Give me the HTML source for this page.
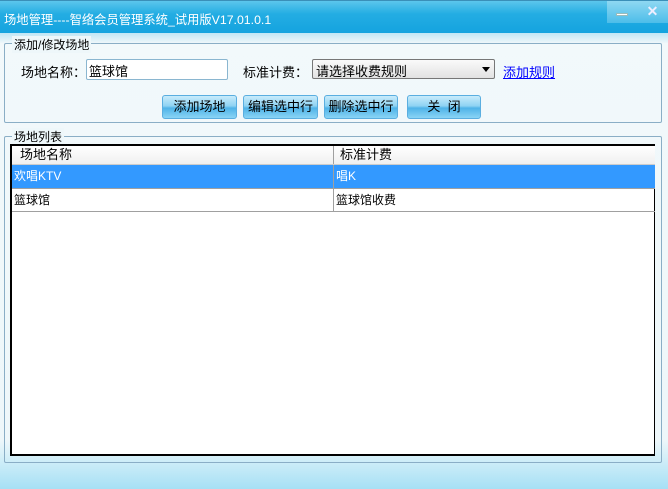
<!DOCTYPE html>
<html><head><meta charset="utf-8"><style>
*{margin:0;padding:0;box-sizing:border-box}
body{width:668px;height:489px;overflow:hidden;font-family:"Liberation Sans","Noto Sans CJK SC","WenQuanYi Zen Hei",sans-serif;font-size:12px;color:#000;position:relative;background:linear-gradient(#f2f9fb 0,#eef7fa 440px,#d0eef8 460px,#a6e0f5 489px)}
.a{position:absolute}
.title{left:0;top:0;width:668px;height:33px;background:linear-gradient(#5cc6ec,#24ade3 40%,#14a3df);border-top:1px solid #3a8fb8}
.title span{position:absolute;left:4px;top:9px;color:#fff;font-size:12.3px}
.below{left:0;top:33px;width:668px;height:10px;background:linear-gradient(#bfe6f5,#eef7fa)}
.grp{border:1px solid #8aaec6;border-radius:2px}
.lg{background:#eef7fa;padding:0 2px;font-size:12px}
.inp{background:#fff;border:1px solid #8ab6d0;border-radius:2px}
.btn{height:24px;border:1px solid #5aaee0;border-radius:3px;background:linear-gradient(#c8ebfb,#8fd3f3 45%,#4fb3e8 55%,#8ad4f5);text-align:center;line-height:22px;font-size:13px}
.list{left:10px;top:144px;width:645px;height:312px;background:#fff;border:2px solid #000;border-right-width:1px;border-bottom-width:2px}
.row{position:absolute;left:0;width:643px;height:23px;line-height:22px}
.c2{position:absolute;left:321px;top:0;height:100%;border-left:1px solid #a0a0a0;padding-left:2px}
</style></head><body>
<div class="a title"><span>场地管理----智络会员管理系统_试用版V17.01.0.1</span>
<div class="a" style="left:607px;top:0;width:30px;height:22px;background:linear-gradient(#8ed8f2,#4cbde9)"><div class="a" style="left:9px;top:12px;width:12px;height:3px;background:#fff;border:1px solid #9bb"></div></div>
<div class="a" style="left:637px;top:0;width:31px;height:22px;background:linear-gradient(#8ed8f2,#4cbde9);color:#eef;font-weight:bold;font-size:14px;text-align:center;line-height:20px">✕</div></div>
<div class="a below"></div>
<div class="a grp" style="left:4px;top:43px;width:658px;height:80px"></div>
<div class="a lg" style="left:12px;top:36px">添加/修改场地</div>
<div class="a" style="left:21px;top:62px;font-size:13px">场地名称：</div>
<div class="a inp" style="left:86px;top:59px;width:142px;height:21px;padding:1px 2px;font-size:13px">篮球馆</div>
<div class="a" style="left:243px;top:62px;font-size:13px">标准计费：</div>
<div class="a" style="left:312px;top:59px;width:183px;height:20px;border:1px solid #777;border-radius:2px;background:linear-gradient(#fafafa,#e2e2e2);padding:1px 3px;font-size:13px">请选择收费规则<span class="a" style="right:4px;top:7px;border:4px solid transparent;border-top:5px solid #000;border-bottom:0"></span></div>
<div class="a" style="left:503px;top:62px;color:#00f;text-decoration:underline;font-size:13px">添加规则</div>
<div class="a btn" style="left:162px;top:95px;width:75px">添加场地</div>
<div class="a btn" style="left:243px;top:95px;width:75px">编辑选中行</div>
<div class="a btn" style="left:324px;top:95px;width:74px">删除选中行</div>
<div class="a btn" style="left:407px;top:95px;width:74px">关&nbsp;&nbsp;闭</div>
<div class="a grp" style="left:4px;top:136px;width:658px;height:327px"></div>
<div class="a lg" style="left:12px;top:128px">场地列表</div>
<div class="a list">
<div class="row" style="top:0;height:19px;line-height:18px;background:linear-gradient(#fff,#f0f0f0);border-bottom:1px solid #ccc;padding-left:8px;font-size:13px">场地名称<div class="c2" style="padding-left:6px">标准计费</div></div>
<div class="row" style="top:19px;height:24px;background:#3399ff;color:#fff;padding-left:2px;border-bottom:1px solid #a0a0a0">欢唱KTV<div class="c2">唱K</div></div>
<div class="row" style="top:43px;height:23px;padding-left:2px;border-bottom:1px solid #a0a0a0">篮球馆<div class="c2">篮球馆收费</div></div>
</div>
</body></html>
